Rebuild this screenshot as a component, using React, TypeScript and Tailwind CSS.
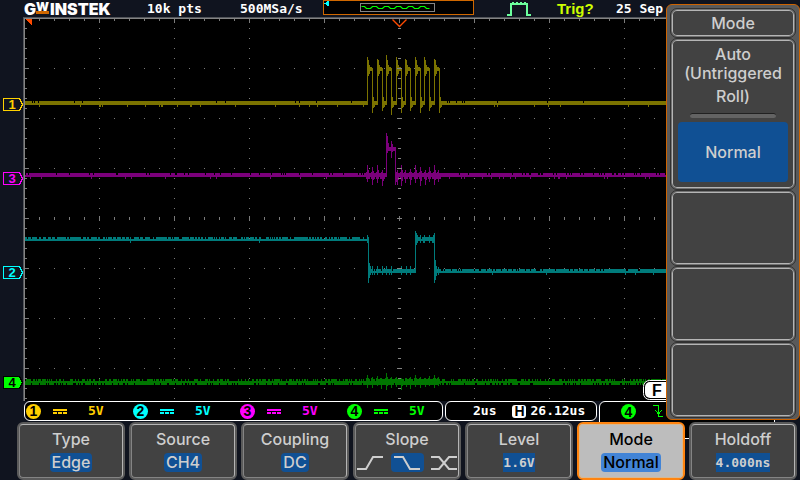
import type { ReactNode } from 'react';
import clsx from 'clsx';

const EDGES = Array.from({ length: 8 }, (_, i) => Math.round(367 + i * 9.5));
const PEAKS = [57, 59, 55, 57, 59, 57, 57, 59];
const DIPS = [113, 111, 115, 113, 111, 113, 111, 113];

// [x, top, bottom] of the crosstalk spikes next to the clock edges
const CH3_SPIKES = [
  [367, 165, 182], [372, 167, 185], [377, 165, 183], [382, 170, 186],
  [397, 170, 185], [401, 165, 186], [405, 170, 183], [410, 169, 185], [415, 165, 183],
  [420, 167, 186], [425, 170, 185], [429, 167, 182], [434, 165, 185], [438, 170, 182],
];
const CH4_SPIKES = [
  [367, 375, 388], [372, 377, 388], [377, 376, 386], [381, 378, 389], [386, 373, 390],
  [391, 377, 388], [396, 377, 387], [401, 378, 390], [406, 378, 387], [410, 377, 389],
  [415, 375, 387], [420, 377, 388], [425, 378, 387], [429, 376, 386], [434, 375, 388], [438, 377, 386],
];

function rng(seed: number) {
  let s = seed * 7919;
  return () => {
    s = (s * 16807) % 2147483647;
    return s / 2147483647;
  };
}

const bar = (x: number, top: number, bottom: number, w = 1) => `M${x} ${top}h${w}V${bottom}h-${w}z`;

// Solid two pixel line, a broken strip above it and a few specks below
function noise(seed: number, x1: number, x2: number, y: number, fill: number, specks: number) {
  const next = rng(seed);
  let d = bar(x1, y, y + 2, x2 - x1);
  for (let x = x1; x < x2; x++) {
    if (next() < fill) d += bar(x, y - 2, y);
    if (next() < specks) d += bar(x, y + 2, y + 4);
  }
  return d;
}

// Vertical spike that widens towards the trace
const spike = ([x, top, bottom]: number[], y: number) =>
  bar(x, top, bottom) + bar(x + 1, Math.round((top + y) / 2), Math.round((bottom + y) / 2)) + bar(x - 1, y - 3, y + 4);

const clock = EDGES.map((x, i) => {
  const f = x + 5;
  return [
    bar(x, PEAKS[i], 105), bar(x + 1, 60, 76), bar(x + 2, 65, 74), bar(x + 3, 67, 71), bar(x + 4, 67, 71),
    bar(f, 68, DIPS[i]), bar(f + 1, 97, 108), bar(f + 2, 101, 107), bar(f + 3, 101, 105), bar(f + 4, 101, 105),
  ].join('');
}).join('');

const CH1 = noise(11, 25, 367, 103, 0.95, 0.06) + clock + noise(12, 441, 800, 103, 0.95, 0.06);
const CH3 =
  noise(31, 25, 367, 175, 0.9, 0.03) +
  noise(32, 367, 386, 175, 1, 0.4) +
  noise(33, 396, 440, 175, 1, 0.4) +
  noise(34, 440, 800, 175, 0.85, 0.05) +
  CH3_SPIKES.map((s) => spike(s, 175)).join('') +
  bar(386, 133, 177) + bar(387, 136, 153) + bar(388, 143, 151) + bar(389, 147, 151, 7) +
  bar(391, 141, 158) + bar(392, 144, 152) + bar(395, 147, 185) + bar(396, 172, 182);
const CH2 =
  noise(21, 25, 368, 239, 0.65, 0.005) +
  bar(367, 235, 243) + bar(368, 237, 283) + bar(369, 263, 278) + bar(370, 266, 275) +
  noise(22, 368, 416, 271, 0.9, 0.15) +
  [372, 377, 382, 386, 391, 401, 406, 410].map((x) => bar(x, 266, 275)).join('') +
  bar(415, 231, 273) + bar(416, 233, 245) + bar(417, 235, 243) +
  noise(23, 416, 435, 239, 0.9, 0.1) +
  [420, 424, 429].map((x) => bar(x, 235, 243)).join('') +
  bar(433, 235, 243) + bar(434, 233, 283) + bar(435, 260, 280) + bar(436, 266, 276) + bar(438, 267, 275) +
  noise(24, 436, 800, 271, 0.8, 0.02);
const CH4 =
  noise(41, 25, 367, 381, 0.5, 0.8) +
  noise(42, 367, 441, 381, 0.9, 0.9) +
  noise(43, 441, 800, 381, 0.5, 0.8) +
  CH4_SPIKES.map((s) => spike(s, 381)).join('');

function gridPath() {
  let d = '';
  for (let x = 39, i = 1; x < 780; x += 15, i++) {
    const major = i % 5 === 0;
    d += bar(x, 19, major ? 23 : 21);
    d += major ? bar(x, 216, 221) : bar(x, 217, 220);
    for (const y of [68, 118, 168, 268, 318, 368]) d += bar(x, y, y + 1);
  }
  for (let y = 28, i = 1; y < 400; y += 10, i++) {
    d += bar(25, y, y + 1, i % 5 === 0 ? 4 : 2);
    for (let x = 99; x < 780; x += 75) d += bar(x, y, y + 1);
  }
  return d;
}

function centreColumn() {
  let d = '';
  for (let y = 28; y < 400; y += 10) d += (y - 18) % 50 === 0 ? bar(397, y, y + 1, 5) : bar(398, y, y + 1, 3);
  return d;
}

interface MarkerProps {
  n: number;
  y: number;
  color: string;
  filled?: boolean;
}

function Marker({ n, y, color, filled }: MarkerProps) {
  return (
    <g>
      <path
        d={`M3.5 ${y - 5.5}h16l3 6l-3 6H3.5z`}
        fill={filled ? color : '#10141f'}
        stroke={filled ? '#000' : color}
      />
      <text x="12" y={y + 5} textAnchor="middle" fill={filled ? '#000' : color} className="font-['Liberation_Sans'] text-[13px] font-bold">
        {n}
      </text>
    </g>
  );
}

function Plot() {
  return (
    <svg viewBox="0 17 800 384" className="block w-full" shapeRendering="crispEdges" role="img" aria-label="Waveforms">
      <rect x="24" y="18" width="776" height="383" fill="#000" />
      <path d={gridPath()} fill="#7b7b7b" />
      <path d={CH4} fill="#007600" />
      <path d={CH2} fill="#007b7b" />
      <path d={CH3} fill="#7b007b" />
      <path d={CH1} fill="#7b7300" />
      <path d={centreColumn()} fill="#848484" />
      <path d="M23 17H800V18H24V401H23z" fill="#52555a" />
      <path d="M24 18H800V19H25V401H24z" fill="#848484" />
      <path d="M25 19h7v7z" fill="#ff4a00" />
      <path d="M392.5 19.5l7 7l7-7" fill="none" stroke="#ff4a00" strokeWidth="1.4" shapeRendering="auto" />
      <Marker n={1} y={104} color="#ffd200" />
      <Marker n={3} y={178} color="#ff00ff" />
      <Marker n={2} y={272} color="#00ffff" />
      <Marker n={4} y={382} color="#00ff00" filled />
      <g shapeRendering="auto">
        <rect x="643.5" y="380.5" width="40" height="19" rx="6" fill="#000" stroke="#fff" />
        <rect x="645" y="382" width="40" height="16" rx="5" fill="#fff" />
        <text x="652" y="396" className="font-['Liberation_Sans'] text-[16px]">F</text>
      </g>
    </svg>
  );
}

function TopBar() {
  return (
    <header className="flex h-[17px] items-start pl-6 leading-[18px] text-white">
      <div className="flex w-[123px] font-['Inter'] text-[16px] leading-[18px] font-black">
        <span>G</span>
        <span className="mr-px h-[14px] border-b-3 border-[#d06800] text-[12px] leading-[13px]">W</span>
        <span>INSTEK</span>
      </div>
      <span className="w-[93px]">10k pts</span>
      <span className="w-[83px]">500MSa/s</span>
      <svg viewBox="0 0 151 16" className="h-4 w-[151px]" shapeRendering="crispEdges">
        <rect x=".5" y=".5" width="150" height="14" fill="#000" stroke="#d06800" />
        <path d="M1 3.5l5-3v6z" fill="#00ffff" />
        <rect x="37.5" y="3.5" width="74" height="8" fill="none" stroke="#848484" />
        <path
          d="M38.5 6.5h3l2 2h4l2-2h4l2 2h4l2-2h4l2 2h4l2-2h4l2 2h4l2-2h4l2 2h4l2-2h4l2 2h3"
          fill="none"
          stroke="#00ff00"
          strokeWidth="1.2"
          shapeRendering="auto"
        />
      </svg>
      <svg viewBox="0 0 24 16" className="ml-[33px] h-4 w-6" fill="none" stroke="#6bff9c" strokeWidth="2" shapeRendering="crispEdges">
        <path d="M0 15h4V4h16v11h4M6 4V2M10 4V2M14 4V2M18 4V2" />
      </svg>
      <span className="ml-[26px] w-[59px] font-['Liberation_Sans'] text-[15px] leading-[17px] text-[#ceff00]">Trig?</span>
      <span className="whitespace-nowrap">25 Sep</span>
    </header>
  );
}

function Badge({ n, className }: { n: number; className: string }) {
  return (
    <span className={clsx("flex size-[15px] items-center justify-center rounded-full font-['Liberation_Sans'] text-[14px] text-black", className)}>
      {n}
    </span>
  );
}

const CHANNELS = [
  { n: 1, text: 'text-[#ffce00]', bg: 'bg-[#ffce00]' },
  { n: 2, text: 'text-[#00ffff]', bg: 'bg-[#00ffff]' },
  { n: 3, text: 'text-[#ff00ff]', bg: 'bg-[#ff00ff]' },
  { n: 4, text: 'text-[#00ff00]', bg: 'bg-[#00ff00]' },
];

function StatusBar() {
  return (
    <div className="flex h-[21px] items-start gap-[2px] pl-6">
      <div className="flex h-5 w-[419px] items-center gap-[29px] rounded-md border border-white bg-black pl-px">
        {CHANNELS.map((ch) => (
          <div key={ch.n} className={clsx('flex items-center', ch.text)}>
            <Badge n={ch.n} className={ch.bg} />
            <svg viewBox="0 0 14 5" className="mr-[21px] ml-3 h-[5px] w-[14px]" fill="currentColor" shapeRendering="crispEdges">
              <path d="M0 0h14v2H0zM0 3h4v2H0zM5 3h4v2H5zM10 3h4v2h-4z" />
            </svg>
            <span className="w-4">5V</span>
          </div>
        ))}
      </div>
      <div className="flex h-5 w-[152px] items-center rounded-md border border-white bg-black pl-[27px] text-white">
        <span>2us</span>
        <span className="mr-1 ml-4 flex h-[13px] w-[14px] items-center justify-center rounded-[3px] bg-white font-['Liberation_Sans'] text-[14px] text-black">
          H
        </span>
        <span>26.12us</span>
      </div>
      <div className="flex h-[38px] w-[176px] rounded-md border border-white bg-black pt-[2px] pl-[21px] text-[#00ff00]">
        <Badge n={4} className="bg-[#00ff00]" />
        <svg viewBox="0 0 10 14" className="ml-[17px] h-[14px] w-[10px]" fill="none" stroke="currentColor" shapeRendering="crispEdges">
          <path d="M0 1.5h5.5v11H10M2 6l3.5 4l3.5-4" />
        </svg>
      </div>
    </div>
  );
}

function Slope({ d, active }: { d: string; active?: boolean }) {
  return (
    <span className={clsx('flex h-[19px] w-[33px] items-center justify-center rounded', active && 'bg-[#105094]')}>
      <svg viewBox="0 0 26 14" className="h-[14px] w-[26px]" fill="none" stroke="currentColor" strokeWidth="2">
        <path d={d} />
      </svg>
    </span>
  );
}

interface SoftKeyProps {
  label: string;
  value?: string;
  mono?: boolean;
  active?: boolean;
  children?: ReactNode;
}

function SoftKey({ label, value, mono, active, children }: SoftKeyProps) {
  return (
    <button
      type="button"
      className={clsx(
        'rounded-md border-2 p-0',
        active ? 'border-[#ff8410] bg-[#bdbdbd] text-black' : 'border-[#5a5a5a] bg-[#424242] text-[#cecece]',
      )}
    >
      <span
        className={clsx(
          'flex h-[54px] flex-col items-center gap-1 rounded border pt-1',
          active ? 'border-[#d8b890]' : 'border-[#b5b5b5] border-b-[#848484] border-l-[#848484]',
        )}
      >
        <span className="leading-5">{label}</span>
        {children ?? (
          <span
            className={clsx(
              'h-[19px] leading-[19px]',
              mono ? "font-['DejaVu_Sans_Mono'] text-[13px] font-bold" : 'rounded px-[2px]',
              active ? 'bg-[#4284d6]' : 'bg-[#105094]',
            )}
          >
            {value}
          </span>
        )}
      </span>
    </button>
  );
}

function SoftKeys() {
  return (
    <nav className="relative grid grid-cols-7 gap-1 pr-[3px] pl-[17px] font-['Inter'] text-[16px] font-medium">
      <SoftKey label="Type" value="Edge" />
      <SoftKey label="Source" value="CH4" />
      <SoftKey label="Coupling" value="DC" />
      <SoftKey label="Slope">
        <span className="flex gap-1">
          <Slope d="M0 13h9L16 1h10" />
          <Slope d="M0 1h9l7 12h10" active />
          <Slope d="M0 1h8l10 12h8M0 13h8L18 1h8" />
        </span>
      </SoftKey>
      <SoftKey label="Level" value="1.6V" mono />
      <SoftKey label="Mode" value="Normal" active />
      <SoftKey label="Holdoff" value="4.000ns" mono />
    </nav>
  );
}

const CELL = 'w-full rounded-md border border-[#737373] bg-[#424242] p-px inset-ring inset-ring-[#b5b5b5] outline outline-[#313131]';

function ModeMenu() {
  return (
    <aside className="absolute top-1 right-0 flex w-[134px] flex-col gap-[2px] rounded-md border border-[#ce6300] bg-[#5a5a5a] px-1 pt-1 pb-[2px] font-['Inter'] text-[16px] font-medium text-[#cecece]">
      <h2 className={clsx(CELL, 'h-7 text-center leading-6')}>Mode</h2>
      <div className={clsx(CELL, 'flex h-[150px] flex-col items-center')}>
        <button type="button" className="flex h-[72px] flex-col items-center pt-1">
          <span className="leading-[19px]">Auto</span>
          <span className="leading-[19px]">(Untriggered</span>
          <span className="leading-[26px]">Roll)</span>
        </button>
        <hr className="h-[5px] w-[86px] rounded-sm border-t border-[#212121] bg-[#636363]" />
        <button type="button" className="mt-1 h-[60px] w-[110px] rounded bg-[#105094]">Normal</button>
      </div>
      <button type="button" aria-label="Empty" className={clsx(CELL, 'h-[74px]')} />
      <button type="button" aria-label="Empty" className={clsx(CELL, 'h-[74px]')} />
      <button type="button" aria-label="Empty" className={clsx(CELL, 'h-[74px]')} />
    </aside>
  );
}

export default function App() {
  return (
    <main className="relative min-h-screen overflow-hidden bg-[#10141f] font-['DejaVu_Sans_Mono'] text-[13px] leading-4 font-bold">
      <TopBar />
      <Plot />
      <StatusBar />
      <SoftKeys />
      <ModeMenu />
    </main>
  );
}
